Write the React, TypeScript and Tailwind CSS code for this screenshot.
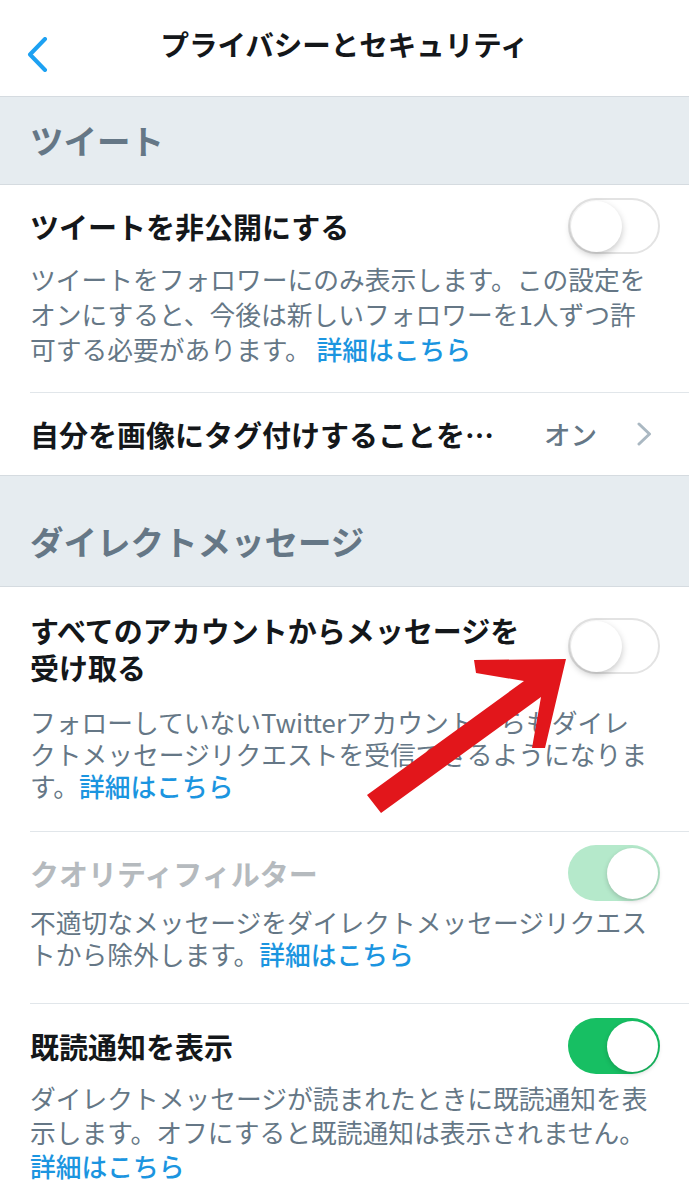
import React from "react";

const font = "font-['Noto_Sans_CJK_JP','Noto_Sans_CJK_SC',sans-serif]";

type ToggleProps = { on?: boolean; disabled?: boolean };

const Toggle = ({ on = false, disabled = false }: ToggleProps) => {
  const track = on
    ? disabled
      ? "bg-[#B5E9CB] justify-end"
      : "bg-[#17BF63] justify-end"
    : "bg-white border-[2px] border-[#E3E3E3] justify-start";
  return (
    <div className={`flex items-center shrink-0 w-[92px] h-[56px] rounded-full p-[2px] ${track}`}>
      <div
        className={`w-[51px] h-[51px] rounded-full bg-white ${
          on ? "shadow-[0_2px_5px_rgba(0,0,0,0.18)]" : "shadow-[0_3px_7px_rgba(0,0,0,0.22)] -ml-[1px]"
        }`}
      />
    </div>
  );
};

const Link = () => <span className="text-[#1B95E0] font-medium">詳細はこちら</span>;

const Section = ({ title, className }: { title: string; className: string }) => (
  <div
    className={`bg-[#E6ECF0] border-y border-[#D5DBE0] pl-[30px] text-[33.5px] font-bold text-[#657786] ${className}`}
  >
    {title}
  </div>
);

export default function App() {
  return (
    <div className={`relative w-[689px] h-[1200px] overflow-hidden bg-white ${font}`}>
      {/* nav bar */}
      <div className="grid grid-cols-[70px_1fr_70px] h-[96px]">
        <div className="pl-[27px] pt-[37px]">
          <svg width="21" height="35" viewBox="0 0 21 35" fill="none">
            <polyline
              points="18,2 3,17.5 18,33"
              stroke="#1DA1F2"
              strokeWidth="4"
              strokeLinecap="round"
              strokeLinejoin="round"
            />
          </svg>
        </div>
        <div className="pt-[27px] text-center text-[28.5px] leading-[34px] font-bold text-[#14171A] whitespace-nowrap">
          プライバシーとセキュリティ
        </div>
        <div />
      </div>

      <Section title="ツイート" className="h-[89px] flex items-center" />

      {/* protect tweets */}
      <div className="ml-[30px] border-b border-[#E1E6EA] pt-[13px] pb-[26px]">
        <div className="flex items-center justify-between pr-[29px]">
          <div className="text-[29px] leading-[36px] font-bold text-[#14171A]">ツイートを非公開にする</div>
          <Toggle />
        </div>
        <div className="mt-[7px] text-[25.75px] leading-[35px] text-[#657786] whitespace-nowrap">
          ツイートをフォロワーにのみ表示します。この設定を
          <br />
          オンにすると、今後は新しいフォロワーを1人ずつ許
          <br />
          可する必要があります。 <Link />
        </div>
      </div>

      {/* photo tagging */}
      <div className="flex items-center h-[82px] pl-[30px] pr-[37px]">
        <div className="flex-1 text-[29px] leading-[36px] font-bold text-[#14171A] whitespace-nowrap">
          自分を画像にタグ付けすることを…
        </div>
        <div className="text-[26.5px] font-medium text-[#657786] mr-[40px]">オン</div>
        <svg width="15" height="24" viewBox="0 0 15 24" fill="none">
          <polyline
            points="2,2 12.5,12 2,22"
            stroke="#AAB8C2"
            strokeWidth="3"
            strokeLinecap="round"
            strokeLinejoin="round"
          />
        </svg>
      </div>

      <Section title="ダイレクトメッセージ" className="h-[112px] pt-[45px] leading-[40px]" />

      {/* message requests */}
      <div className="ml-[30px] border-b border-[#E1E6EA] pt-[25px] pb-[29px]">
        <div className="flex items-start justify-between pr-[29px]">
          <div className="text-[29px] leading-[37px] font-bold text-[#14171A] whitespace-nowrap">
            すべてのアカウントからメッセージを
            <br />
            受け取る
          </div>
          <div className="mt-[6px]">
            <Toggle />
          </div>
        </div>
        <div className="mt-[20px] text-[25.75px] leading-[32px] text-[#657786] whitespace-nowrap">
          フォローしていないTwitterアカウントからもダイレ
          <br />
          クトメッセージリクエストを受信できるようになりま
          <br />
          す。<Link />
        </div>
      </div>

      {/* quality filter */}
      <div className="ml-[30px] border-b border-[#E1E6EA] pt-[13px] pb-[33px]">
        <div className="flex items-center justify-between pr-[29px]">
          <div className="text-[29px] leading-[36px] font-bold text-[#B5BABE]">クオリティフィルター</div>
          <Toggle on disabled />
        </div>
        <div className="mt-[5px] text-[25.75px] leading-[32px] text-[#657786] whitespace-nowrap">
          不適切なメッセージをダイレクトメッセージリクエス
          <br />
          トから除外します。<Link />
        </div>
      </div>

      {/* read receipts */}
      <div className="ml-[30px] pt-[14px]">
        <div className="flex items-center justify-between pr-[29px]">
          <div className="text-[29px] leading-[36px] font-bold text-[#14171A]">既読通知を表示</div>
          <Toggle on />
        </div>
        <div className="mt-[7px] text-[25.75px] leading-[34px] text-[#657786] whitespace-nowrap">
          ダイレクトメッセージが読まれたときに既読通知を表
          <br />
          示します。オフにすると既読通知は表示されません。
          <br />
          <Link />
        </div>
      </div>

      {/* red annotation arrow */}
      <svg className="absolute left-0 top-0 pointer-events-none" width="689" height="1200" viewBox="0 0 689 1200">
        <polygon
          points="566,659 474,660 476,673 524,681 367,795 381,813 541,697 532,748 545,748"
          fill="#E2161B"
        />
      </svg>
    </div>
  );
}
